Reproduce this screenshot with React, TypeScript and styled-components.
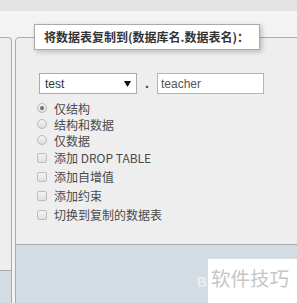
import React from "react";
import styled, { createGlobalStyle } from "styled-components";

const GlobalStyle = createGlobalStyle`
  html, body { margin: 0; padding: 0; }
  body {
    width: 297px;
    height: 303px;
    overflow: hidden;
    background: #f3f3f3;
    font-family: "Liberation Sans", Arial, "Noto Sans CJK SC", sans-serif;
  }
`;

const Page = styled.div`
  position: relative;
  width: 297px;
  height: 303px;
  overflow: hidden;
  display: flex;
  flex-direction: column;
`;

const TopBar = styled.div`
  flex: none;
  height: 11px;
  background: #e4e4e4;
`;

const Workspace = styled.div`
  flex: 1;
  display: flex;
  align-items: flex-start;
  padding-top: 13px;
  min-height: 0;
`;

const SidePanel = styled.div`
  flex: none;
  width: 11px;
  margin-top: 13px;
  height: 290px;
  border-top: 1px solid #aaa;
  border-right: 1px solid #aaa;
  border-top-right-radius: 4px;
  background: #eee;
  overflow: hidden;
`;

const SideBody = styled.div`
  height: 232px;
`;

const Footer = styled.div<{ $h: number }>`
  height: ${(p) => p.$h}px;
  background: #d3dce3;
  border-top: 1px solid #aaa;
`;

const Fieldset = styled.fieldset`
  flex: none;
  width: 300px;
  margin: 0 0 0 3px;
  padding: 0;
  border: 1px solid #aaa;
  border-top-left-radius: 4px;
  background: #eee;
  min-width: 0;
`;

const Legend = styled.legend`
  margin-left: 18px;
  padding: 5px 10px 5px 9px;
  background: #fff;
  border: 1px solid #aaa;
  box-shadow: 2px 2px 5px rgba(0, 0, 0, 0.22);
  font-family: "Noto Sans CJK SC", sans-serif;
  font-weight: bold;
  font-size: 12px;
  line-height: 14px;
  color: #333;
  white-space: nowrap;
`;

const FieldBody = styled.div`
  box-sizing: border-box;
  height: 194px;
  padding: 23px 0 0 21px;
`;

const TargetRow = styled.div`
  display: flex;
  align-items: center;
  height: 21px;
  margin-left: 2px;
`;

const FakeSelect = styled.div`
  box-sizing: border-box;
  width: 98px;
  height: 21px;
  border: 1px solid #aaa;
  background: #fff;
  display: flex;
  align-items: center;
  justify-content: space-between;
  padding: 0 5px 0 5px;
  font-size: 12px;
  color: #333;
`;

const Dot = styled.span`
  width: 20px;
  text-align: center;
  font-size: 14px;
  font-weight: bold;
  color: #444;
  line-height: 21px;
`;

const TextInput = styled.input`
  box-sizing: border-box;
  width: 107px;
  height: 21px;
  margin: 0;
  border: 1px solid #b4b4b4;
  background: #fff;
  padding: 0 3px;
  font-family: "Liberation Sans", Arial, sans-serif;
  font-size: 12px;
  color: #555;
  outline: none;
`;

const OptionList = styled.div`
  margin-top: 6px;
  display: flex;
  flex-direction: column;
`;

const OptionRow = styled.label<{ $h: number }>`
  display: flex;
  align-items: center;
  gap: 7px;
  height: ${(p) => p.$h}px;
  font-family: "Noto Sans CJK SC", sans-serif;
  font-size: 12px;
  color: #4a4a4a;
  white-space: nowrap;
`;

const RadioMark = styled.span<{ $on?: boolean }>`
  box-sizing: border-box;
  width: 10px;
  height: 10px;
  border-radius: 50%;
  border: 1px solid #b8b8b8;
  background: linear-gradient(#f4f4f4, #dcdcdc);
  display: flex;
  align-items: center;
  justify-content: center;
  &::after {
    content: "";
    width: 4px;
    height: 4px;
    border-radius: 50%;
    background: ${(p) => (p.$on ? "#6f6f6f" : "transparent")};
  }
`;

const CheckMark = styled.span`
  box-sizing: border-box;
  width: 10px;
  height: 10px;
  border-radius: 2px;
  border: 1px solid #bdbdbd;
  background: linear-gradient(#f2f2f2, #e0e0e0);
`;

const Watermark = styled.div`
  position: absolute;
  right: 0;
  bottom: 0;
  display: flex;
  align-items: flex-start;
`;

const GhostMark = styled.span`
  margin-top: 17px;
  margin-right: 1px;
  font-family: "Liberation Sans", Arial, sans-serif;
  font-weight: bold;
  font-size: 14px;
  line-height: 12px;
  color: #eceef0;
`;

const WatermarkBox = styled.div`
  box-sizing: border-box;
  width: 89px;
  height: 44px;
  background: #fff;
  padding: 8px 0 0 3px;
  font-family: "Noto Sans CJK SC", sans-serif;
  font-size: 19.5px;
  line-height: 22px;
  color: #c6c6c6;
  white-space: nowrap;
`;

const radios = [
  { label: "仅结构", on: true },
  { label: "结构和数据", on: false },
  { label: "仅数据", on: false },
];

const checks = ["添加 DROP TABLE", "添加自增值", "添加约束", "切换到复制的数据表"];

export default function App() {
  return (
    <>
      <GlobalStyle />
      <Page>
        <TopBar />
        <Workspace>
          <SidePanel>
            <SideBody />
            <Footer $h={60} />
          </SidePanel>
          <Fieldset>
            <Legend>将数据表复制到(数据库名.数据表名)：</Legend>
            <FieldBody>
              <TargetRow>
                <FakeSelect>
                  <span>test</span>
                  <svg width="7" height="6" viewBox="0 0 7 6">
                    <polygon points="0,0 7,0 3.5,6" fill="#111" />
                  </svg>
                </FakeSelect>
                <Dot>.</Dot>
                <TextInput defaultValue="teacher" readOnly />
              </TargetRow>
              <OptionList>
                {radios.map((r) => (
                  <OptionRow key={r.label} $h={16}>
                    <RadioMark $on={r.on} />
                    {r.label}
                  </OptionRow>
                ))}
                {checks.map((c) => (
                  <OptionRow key={c} $h={19}>
                    <CheckMark />
                    {c}
                  </OptionRow>
                ))}
              </OptionList>
            </FieldBody>
            <Footer $h={70} />
          </Fieldset>
        </Workspace>
        <Watermark>
          <GhostMark>B</GhostMark>
          <WatermarkBox>软件技巧</WatermarkBox>
        </Watermark>
      </Page>
    </>
  );
}
